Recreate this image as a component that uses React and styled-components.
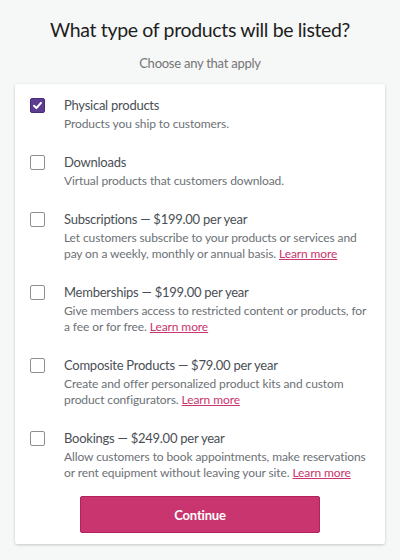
import React, { useState } from "react";
import styled, { createGlobalStyle } from "styled-components";

const Global = createGlobalStyle`
  html, body { margin: 0; padding: 0; background: #f6f7f7; }
  body { font-family: Lato, "Liberation Sans", sans-serif; -webkit-font-smoothing: antialiased; }
  * { box-sizing: border-box; }
`;

const Page = styled.div`
  width: 400px;
  height: 560px;
  display: flex;
  flex-direction: column;
  align-items: center;
  padding-top: 17px;
`;

const Heading = styled.h1`
  margin: 0;
  font-size: 19.5px;
  line-height: 26px;
  letter-spacing: -0.35px;
  font-weight: 400;
  color: #1e1e1e;
`;

const Sub = styled.p`
  margin: 11px 0 0;
  font-size: 13px;
  line-height: 18px;
  letter-spacing: -0.25px;
  color: #757575;
`;

const Card = styled.div`
  margin-top: 12px;
  width: 370px;
  background: #fff;
  border-radius: 2px;
  box-shadow: 0 1px 3px rgba(0, 0, 0, 0.2);
  padding: 11px 14px 11px 14px;
  display: flex;
  flex-direction: column;
`;

const List = styled.div`
  display: flex;
  flex-direction: column;
  gap: 20px;
`;

const Row = styled.label`
  display: flex;
  align-items: flex-start;
  gap: 20px;
  cursor: pointer;
`;

const Box = styled.span`
  flex: none;
  width: 15px;
  height: 15px;
  margin: 3px 0 0 1px;
  border-radius: 2px;
  border: 1px solid ${(p) => (p.$checked ? "#4b2c7a" : "#8c8f94")};
  background: ${(p) => (p.$checked ? "#5c3d92" : "#fff")};
  display: flex;
  align-items: center;
  justify-content: center;
`;

const Texts = styled.div`
  display: flex;
  flex-direction: column;
  margin-left: -1px;
`;

const Title = styled.div`
  font-size: 13px;
  line-height: 20px;
  letter-spacing: -0.25px;
  color: #4a4f55;
`;

const Desc = styled.div`
  margin-top: 1px;
  font-size: 12px;
  line-height: 16px;
  letter-spacing: -0.1px;
  color: #6c7176;
`;

const Link = styled.a`
  color: #c9356e;
  text-decoration: underline;
`;

const Button = styled.button`
  margin: 15px auto 0;
  width: 240px;
  height: 37px;
  background: #c9356e;
  border: 1px solid #b5215c;
  border-radius: 2px;
  color: #fff;
  font-family: inherit;
  font-size: 13px;
  font-weight: 700;
  letter-spacing: -0.2px;
  cursor: pointer;
`;

const items = [
  { title: "Physical products", desc: "Products you ship to customers." },
  { title: "Downloads", desc: "Virtual products that customers download." },
  {
    title: "Subscriptions — $199.00 per year",
    desc: "Let customers subscribe to your products or services and pay on a weekly, monthly or annual basis.",
    link: true,
  },
  {
    title: "Memberships — $199.00 per year",
    desc: "Give members access to restricted content or products, for a fee or for free.",
    link: true,
  },
  {
    title: "Composite Products — $79.00 per year",
    desc: "Create and offer personalized product kits and custom product configurators.",
    link: true,
  },
  {
    title: "Bookings — $249.00 per year",
    desc: "Allow customers to book appointments, make reservations or rent equipment without leaving your site.",
    link: true,
  },
];

const Check = () => (
  <svg width="11" height="11" viewBox="0 0 12 12">
    <path d="M2.2 6.3 L4.8 8.8 L9.8 3.2" fill="none" stroke="#fff" strokeWidth="2.2" strokeLinecap="round" strokeLinejoin="round" />
  </svg>
);

export default function App() {
  const [checked, setChecked] = useState([true, false, false, false, false, false]);
  return (
    <>
      <Global />
      <Page>
        <Heading>What type of products will be listed?</Heading>
        <Sub>Choose any that apply</Sub>
        <Card>
          <List>
            {items.map((it, i) => (
              <Row
                key={i}
                onClick={() => setChecked((c) => c.map((v, j) => (j === i ? !v : v)))}
              >
                <Box $checked={checked[i]}>{checked[i] && <Check />}</Box>
                <Texts>
                  <Title>{it.title}</Title>
                  <Desc>
                    {it.desc}
                    {it.link && (
                      <>
                        {" "}
                        <Link href="#" onClick={(e) => e.preventDefault()}>Learn more</Link>
                      </>
                    )}
                  </Desc>
                </Texts>
              </Row>
            ))}
          </List>
          <Button>Continue</Button>
        </Card>
      </Page>
    </>
  );
}
